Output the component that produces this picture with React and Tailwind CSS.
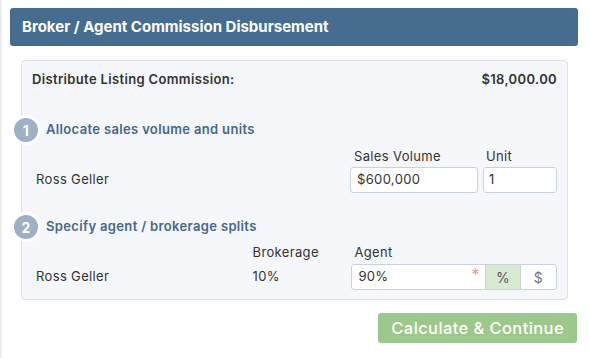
import React from 'react';

const StepBadge = ({ n }) => (
  <div className="absolute -left-[11px] top-1/2 -translate-y-1/2 w-[30px] h-[30px] rounded-full bg-white flex items-center justify-center">
    <div className="w-[24px] h-[24px] rounded-full bg-[#9db0c5] text-white text-[14px] font-bold flex items-center justify-center">
      {n}
    </div>
  </div>
);

const App = () => {
  return (
    <div
      className="w-[590px] h-[358px] bg-white border-l-2 border-[#ececec] pl-[8px] pr-[12px] pt-[8px] text-[#2b2b2b] tracking-[0.35px]"
      style={{ fontFamily: 'Inter, "Open Sans", sans-serif' }}
    >
      {/* Header */}
      <div className="h-[38px] bg-[#466d90] rounded-[3px] flex items-center px-[12px]">
        <h1 className="text-white text-[15px] font-bold tracking-[0px]">
          Broker / Agent Commission Disbursement
        </h1>
      </div>

      {/* Card */}
      <div className="mt-[14px] ml-[11px] mr-[10px] h-[240px] bg-[#f5f7fa] border border-[#dde2e8] rounded-[4px] px-[10px] pt-[10px]">
        <div className="flex justify-between items-center h-[18px] text-[13px] font-semibold text-[#333]">
          <span>Distribute Listing Commission:</span>
          <span>$18,000.00</span>
        </div>

        {/* Step 1 */}
        <div className="relative mt-[29px] h-[24px] flex items-center -mx-[10px] pl-[24px]">
          <StepBadge n={1} />
          <span className="text-[13px] font-semibold text-[#44688d]">Allocate sales volume and units</span>
        </div>

        <div className="flex mt-[5px] text-[13px] text-[#333]">
          <div className="flex-1 flex items-end pb-[4px] pl-[4px]">Ross Geller</div>
          <div className="w-[128px] mr-[5px]">
            <div className="h-[20px] pl-[4px]">Sales Volume</div>
            <div className="h-[26px] bg-white border border-[#c9d3de] rounded-[3px] flex items-center px-[6px]">$600,000</div>
          </div>
          <div className="w-[74px]">
            <div className="h-[20px] pl-[3px]">Unit</div>
            <div className="h-[26px] bg-white border border-[#c9d3de] rounded-[3px] flex items-center px-[5px]">1</div>
          </div>
        </div>

        {/* Step 2 */}
        <div className="relative mt-[22px] h-[24px] flex items-center -mx-[10px] pl-[24px]">
          <StepBadge n={2} />
          <span className="text-[13px] font-semibold text-[#44688d]">Specify agent / brokerage splits</span>
        </div>

        <div className="flex mt-[4px] text-[13px] text-[#333]">
          <div className="w-[221px] flex items-end pb-[4px] pl-[4px]">Ross Geller</div>
          <div className="w-[99px]">
            <div className="h-[21px]">Brokerage</div>
            <div className="h-[26px] flex items-center">10%</div>
          </div>
          <div className="w-[206px]">
            <div className="h-[21px] pl-[3px]">Agent</div>
            <div className="h-[26px] flex bg-white border border-[#c9d3de] rounded-[3px] overflow-hidden">
              <div className="relative flex-1 flex items-center px-[6px]">
                90%
                <span className="absolute right-[5px] top-[2px] text-[#e8a0a0] text-[17px] leading-none">*</span>
              </div>
              <div className="w-[35px] bg-[#d9ead3] border-l border-[#c9d3de] flex items-center justify-center text-[#555] text-[14px]">%</div>
              <div className="w-[36px] border-l border-[#c9d3de] flex items-center justify-center text-[#777] text-[14px]">$</div>
            </div>
          </div>
        </div>
      </div>

      {/* Action */}
      <div className="flex justify-end mt-[13px] mr-[1px]">
        <button className="h-[30px] px-[13px] bg-[#9dc88c] text-white text-[16.5px] rounded-[3px] font-medium tracking-[0.4px]">
          Calculate &amp; Continue
        </button>
      </div>
    </div>
  );
};

export default App;
